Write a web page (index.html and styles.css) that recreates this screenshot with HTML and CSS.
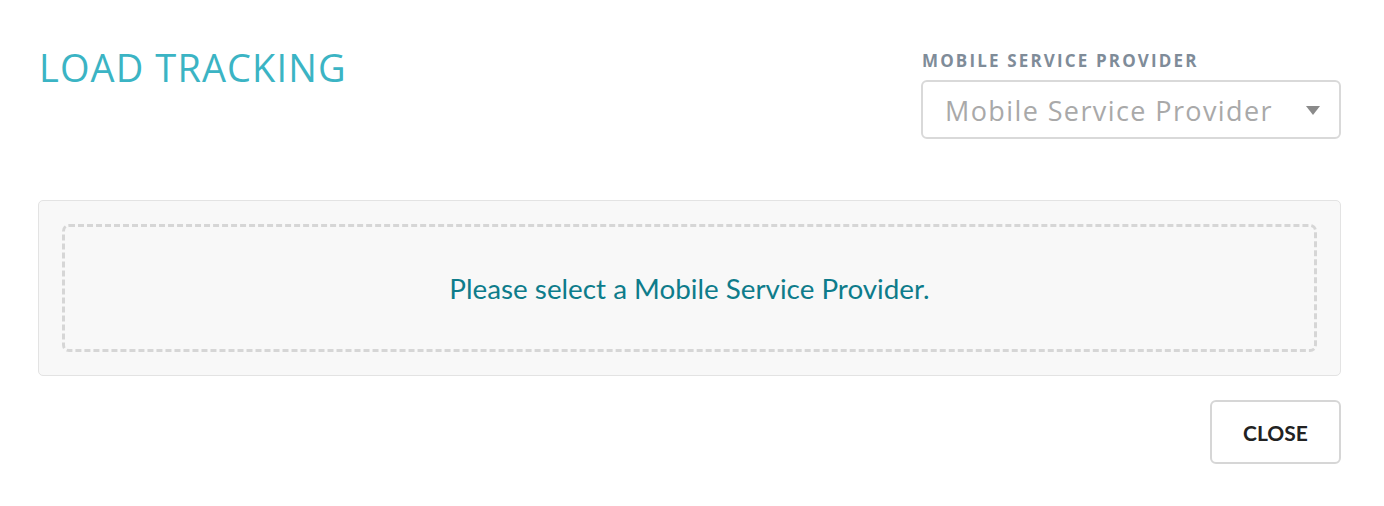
FILE: index.html
```html
<!DOCTYPE html>
<html lang="en">
<head>
<meta charset="utf-8">
<title>Load Tracking</title>
<link rel="stylesheet" href="styles.css">
</head>
<body>
<div class="modal">
  <div class="header">
    <h1 class="title">LOAD TRACKING</h1>
    <div class="field">
      <label class="field-label">MOBILE SERVICE PROVIDER</label>
      <div class="select">
        <span class="select-text">Mobile Service Provider</span>
        <svg class="caret" width="14" height="9" viewBox="0 0 14 9"><path d="M0 0 H14 L7 9 Z" fill="#8a8a8a"/></svg>
      </div>
    </div>
  </div>
  <div class="panel">
    <div class="dropzone">
      <p class="message">Please select a Mobile Service Provider.</p>
    </div>
  </div>
  <div class="footer">
    <button class="btn">CLOSE</button>
  </div>
</div>
</body>
</html>
```
FILE: styles.css
```css
html, body {
  margin: 0;
  padding: 0;
  background: #ffffff;
}
.modal {
  padding: 50px 43px 0 38px;
  font-family: "Open Sans", "Liberation Sans", sans-serif;
}
.header {
  display: flex;
  justify-content: space-between;
  align-items: flex-start;
}
.title {
  margin: 0;
  padding-left: 1px;
  font-family: "Open Sans", sans-serif;
  font-weight: 400;
  font-size: 38px;
  line-height: 34px;
  letter-spacing: 1.1px;
  color: #3bb4c4;
}
.field {
  width: 420px;
  display: flex;
  flex-direction: column;
}
.field-label {
  font-family: "Open Sans", sans-serif;
  font-weight: 700;
  font-size: 17px;
  line-height: 22px;
  letter-spacing: 2.15px;
  color: #7f8c99;
  padding-left: 1px;
  margin-bottom: 8px;
}
.select {
  box-sizing: border-box;
  height: 59px;
  border: 2px solid #d9d9d9;
  border-radius: 6px;
  display: flex;
  align-items: center;
  justify-content: space-between;
  padding: 2px 19px 0 22px;
}
.select-text {
  font-family: "Open Sans", sans-serif;
  font-size: 27px;
  color: #a9a9a9;
  letter-spacing: 1.4px;
}
.caret {
  display: block;
}
.panel {
  margin-top: 61px;
  box-sizing: border-box;
  height: 176px;
  background: #f8f8f8;
  border: 1px solid #e3e3e3;
  border-radius: 5px;
  padding: 23px;
}
.dropzone {
  box-sizing: border-box;
  height: 128px;
  border: 3px dashed #d6d6d6;
  border-radius: 7px;
  display: flex;
  align-items: center;
  justify-content: center;
}
.message {
  margin: 0;
  font-family: Lato, sans-serif;
  font-size: 27.8px;
  color: #0e7c8b;
}
.footer {
  display: flex;
  justify-content: flex-end;
  margin-top: 24px;
}
.btn {
  box-sizing: border-box;
  width: 131px;
  height: 64px;
  background: #ffffff;
  border: 2px solid #d6d6d6;
  border-radius: 6px;
  font-family: Lato, sans-serif;
  font-weight: 700;
  font-size: 21px;
  color: #222222;
  cursor: pointer;
}
```
